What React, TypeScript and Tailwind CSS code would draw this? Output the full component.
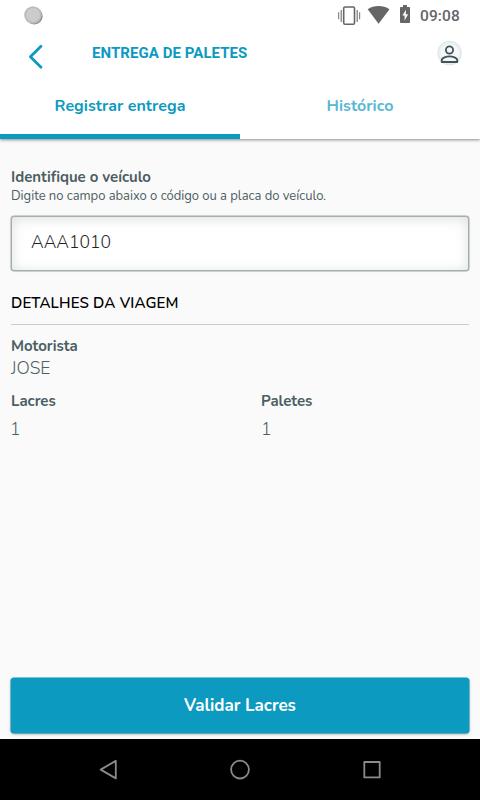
import type { ReactNode } from "react";

function StatusBar() {
  return (
    <div className="flex h-8 shrink-0 items-start pl-[23px] pr-5">
      <svg width="22" height="28" viewBox="0 0 22 28" className="mr-auto">
        <circle cx="11.3" cy="16.2" r="8.3" fill="#858585" />
        <circle cx="10" cy="15" r="8.8" fill="#bdbdbd" />
        <circle cx="10" cy="15" r="7.2" fill="#cccccc" stroke="#b2b2b2" strokeWidth="0.8" strokeDasharray="1 1.5" />
      </svg>
      <svg width="76" height="28" viewBox="337 0 76 28" className="mr-[7px]">
        <g fill="none" stroke="#666">
          <rect x="343.7" y="7" width="10.8" height="17.2" rx="1.3" strokeWidth="1.6" />
          <path d="M341.2 10v12M357.2 10v12" strokeWidth="1.2" stroke="#777" />
          <path d="M338.6 12.3v7M359.6 12.3v7" strokeWidth="1.2" stroke="#888" />
        </g>
        <path d="M367.7 9.2C374 4.9 383 4.9 389.5 9.2L378.6 23.8Z" fill="#666" />
        <path d="M403 5h4v2h2.2q.8 0 .8.8v14.4q0 .8-.8.8h-8.4q-.8 0-.8-.8V7.800q0-.8.8-.8H403Z" fill="#666" />
        <path d="M406 9.800l-3.600 5.700h2.200v5l3.500-6.200h-2.300Z" fill="#fff" />
      </svg>
      <span className="mt-[6px] w-10 whitespace-nowrap font-[Roboto,sans-serif] text-[15.5px] font-medium leading-5 tracking-[0.1px] text-[#666]">09:08</span>
    </div>
  );
}

function AppBar() {
  return (
    <header className="flex h-12 shrink-0 items-start pl-7 pr-[17px]">
      <svg width="16" height="28" viewBox="0 0 16 28" className="mt-[11px]" fill="none" stroke="#0d9ac0" strokeWidth="2.8" strokeLinecap="round" strokeLinejoin="round">
        <path d="M13 3.300L2.400 13.800L13 24.300" />
      </svg>
      <h1 className="ml-12 mt-[11px] whitespace-nowrap font-[Roboto,sans-serif] text-[15px] font-bold leading-5 tracking-[0.06px] text-[#0d9ac0]">ENTREGA DE PALETES</h1>
      <svg width="26" height="26" viewBox="0 0 26 26" className="ml-auto mt-2">
        <defs>
          <radialGradient id="halo">
            <stop offset="65%" stopColor="#f7f9f9" />
            <stop offset="100%" stopColor="#dde6e8" />
          </radialGradient>
        </defs>
        <circle cx="12.600" cy="13" r="12.300" fill="url(#halo)" />
        <g fill="none" stroke="#3f5559" strokeWidth="1.800">
          <circle cx="12.500" cy="10" r="3.600" />
          <path d="M4.700 22v-1.500c0-2.700 4.900-4.100 7.800-4.100s7.800 1.400 7.800 4.100V22Z" strokeLinejoin="round" />
        </g>
      </svg>
    </header>
  );
}

function Tab({ active, children }: { active?: boolean; children: ReactNode }) {
  return (
    <div className={`flex flex-1 justify-center border-b-[5px] pt-4 text-[16px] font-bold leading-5 tracking-[0.05px] ${active ? "border-[#0d9ac0] text-[#0d9ac0]" : "border-transparent text-[#56b8d2]"}`}>
      {children}
    </div>
  );
}

function Label({ children }: { children: ReactNode }) {
  return <div className="whitespace-nowrap text-[15px] font-bold leading-5 tracking-[-0.03px]">{children}</div>;
}

function Value({ children }: { children: ReactNode }) {
  return <div className="text-[17.5px] font-light leading-6">{children}</div>;
}

export default function App() {
  return (
    <div className="flex h-[800px] w-[480px] flex-col overflow-hidden bg-[#fafafa] font-[Nunito,'Open_Sans',sans-serif] text-[#4b5e63]">
      <div className="flex h-[139px] shrink-0 flex-col bg-white shadow-[0_1px_3px_rgba(0,0,0,0.45)]">
        <StatusBar />
        <AppBar />
        <nav className="flex flex-1">
          <Tab active><span className="whitespace-nowrap">Registrar entrega</span></Tab>
          <Tab><span>Histórico</span></Tab>
        </nav>
      </div>
      <main className="flex flex-1 flex-col px-[11px] pt-[28px]">
        <Label>Identifique o veículo</Label>
        <p className="mt-px whitespace-nowrap text-[13px] leading-4 tracking-[-0.03px]">Digite no campo abaixo o código ou a placa do veículo.</p>
        <div className="mt-[12px] flex h-[55px] items-center rounded-[3px] border border-[#a3aeb0] bg-white pb-[3px] pl-[19px] text-[17.5px] font-light text-[#222] shadow-[inset_0_2px_13px_rgba(0,0,0,0.13),0_0_0_0.5px_#a3aeb0,0_0_6px_rgba(0,0,0,0.03)]">AAA1010</div>
        <h2 className="mt-[22px] whitespace-nowrap text-[15px] font-semibold leading-5 tracking-[0.15px] text-black">DETALHES DA VIAGEM</h2>
        <div className="mt-[11px] h-px shrink-0 bg-[#c7cdce]" />
        <div className="mt-[11px]"><Label>Motorista</Label></div>
        <Value>JOSE</Value>
        <div className="-ml-px mt-[11px] grid grid-cols-[251px_1fr]">
          <div className="pl-px"><Label>Lacres</Label><div className="-ml-px mt-[6px]"><Value>1</Value></div></div>
          <div><Label>Paletes</Label><div className="mt-[6px]"><Value>1</Value></div></div>
        </div>
        <button className="mb-[6px] mt-auto h-[55px] shrink-0 rounded-[3px] bg-[#0d9ac0] text-[17px] font-bold text-white shadow-[0_0_0_0.5px_#0d9ac0,0_1px_3px_rgba(0,0,0,0.4)]">Validar Lacres</button>
      </main>
      <footer className="flex h-[61px] shrink-0 items-center justify-center bg-black">
        <svg width="288" height="24" viewBox="96 758 288 24" fill="none" stroke="#8b8b8b" strokeWidth="1.800" strokeLinejoin="round">
          <path d="M115.800 760.800V778.400L100.700 769.600Z" />
          <circle cx="240" cy="769.600" r="8.900" />
          <rect x="364.300" y="762" width="15.400" height="15.400" />
        </svg>
      </footer>
    </div>
  );
}
